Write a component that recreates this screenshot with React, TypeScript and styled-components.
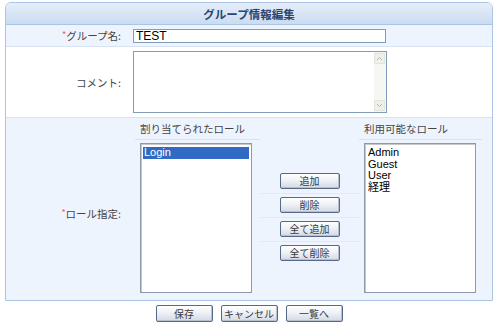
import styled, { createGlobalStyle } from 'styled-components';

const GlobalStyle = createGlobalStyle`
    body {
        margin: 0;
        background: #fff;
        font-family: "Liberation Sans", "Noto Sans CJK JP", sans-serif;
        color: #333;
    }
`

const Page = styled.div`
    padding: 2px 0 0 5px;
    width: 498px;
    box-sizing: border-box;
`

const Panel = styled.div`
    width: 488px;
    box-sizing: border-box;
    border: 1px solid #a9c4e5;
    border-radius: 6px 6px 0 0;
    overflow: hidden;
`

const Header = styled.div`
    height: 21px;
    border-bottom: 1px solid #a9c4e5;
    background: linear-gradient(#e6eefa, #cbdcf1);
    display: flex;
    align-items: center;
    justify-content: center;
    font-family: "Noto Sans CJK JP", sans-serif;
    font-size: 11.5px;
    font-weight: bold;
    color: #2a4670;
`

const Row = styled.div<{ $shade?: boolean; $h: number }>`
    display: grid;
    grid-template-columns: 127px 1fr;
    height: ${p => p.$h}px;
    box-sizing: border-box;
    background: ${p => (p.$shade ? '#eef4fd' : '#fff')};
    border-bottom: 1px solid #d7e3f3;

    &:last-child {
        border-bottom: none;
    }
`

const Label = styled.div<{ $drop?: number }>`
    align-self: center;
    text-align: right;
    padding-right: 12px;
    margin-top: ${p => p.$drop || 0}px;
    font-family: "Noto Sans CJK JP", sans-serif;
    font-size: 10.5px;
    color: #444;
`

const Req = styled.span`
    color: #e8605a;
    font-size: 9px;
    vertical-align: 2px;
`

const Cell = styled.div<{ $pad?: string }>`
    display: flex;
    align-items: flex-start;
    padding: ${p => p.$pad || '0'};
`

const TextInput = styled.input`
    width: 253px;
    height: 14px;
    box-sizing: border-box;
    border: 1px solid #7f9db9;
    padding: 0 2px;
    font-family: "Liberation Sans", sans-serif;
    font-size: 12px;
    color: #000;
    outline: none;
`

const AreaWrap = styled.div`
    width: 254px;
    height: 62px;
    box-sizing: border-box;
    border: 1px solid #7f9db9;
    display: flex;
    background: #fff;
`

const Area = styled.textarea`
    flex: 1;
    border: none;
    resize: none;
    outline: none;
    padding: 2px;
    font-family: "Liberation Sans", sans-serif;
    font-size: 12px;
`

const ScrollBar = styled.div`
    width: 11px;
    display: flex;
    flex-direction: column;
    justify-content: space-between;
    background: #f6f6f2;
    padding: 1px 1px 1px 0;
`

const ScrollBtn = styled.div`
    height: 11px;
    background: #f0f0ea;
    border: 1px solid #e4e4dc;
    box-sizing: border-box;
    display: flex;
    align-items: center;
    justify-content: center;
`

const RoleGrid = styled.div`
    display: grid;
    grid-template-columns: 125px 99px 123px;
    grid-template-rows: 22px 1fr;
    padding-left: 2px;
    height: 100%;
`

const ColHead = styled.div<{ $indent: number; $line?: boolean }>`
    font-family: "Noto Sans CJK JP", sans-serif;
    font-size: 10.5px;
    color: #444;
    padding-left: ${p => p.$indent}px;
    display: flex;
    align-items: center;
    border-bottom: ${p => (p.$line ? '1px solid #d7e3f3' : 'none')};
`

const ListCell = styled.div<{ $indent: number }>`
    padding: 3px 0 0 ${p => p.$indent}px;
`

const ListBox = styled.div`
    width: 112px;
    height: 150px;
    box-sizing: border-box;
    border: 1px solid #8c9aab;
    box-shadow: inset 1px 1px 0 #c8c8c8;
    background: #fff;
    padding: 3px 2px;
    font-family: "Liberation Sans", "Noto Sans CJK JP", sans-serif;
    font-size: 11px;
    color: #000;
`

const ListItem = styled.div<{ $selected?: boolean }>`
    height: 11.5px;
    line-height: 11.5px;
    padding-left: 1px;
    background: ${p => (p.$selected ? '#316ac5' : 'transparent')};
    color: ${p => (p.$selected ? '#fff' : '#000')};
    white-space: nowrap;
`

const BtnColumn = styled.div`
    padding-top: 29px;
    display: flex;
    flex-direction: column;
`

const BtnCell = styled.div`
    height: 24px;
    box-sizing: border-box;
    display: flex;
    justify-content: center;
    padding-top: 4px;

    & + & {
        border-top: 1px solid #e2e9f2;
        padding-top: 3px;
    }
`

const Button = styled.button<{ $w: number; $h: number }>`
    width: ${p => p.$w}px;
    height: ${p => p.$h}px;
    padding: 0;
    border: 1px solid #56698a;
    border-radius: 2px;
    background: linear-gradient(#ffffff, #eef1f6 45%, #d3d9e4);
    box-shadow: inset -1px -1px 0 #b8c0ce;
    font-family: "Noto Sans CJK JP", sans-serif;
    font-size: 10px;
    line-height: 1;
    color: #3a3a3a;
    cursor: pointer;
`

const Footer = styled.div`
    width: 488px;
    display: flex;
    justify-content: center;
    gap: 8px;
    padding-top: 4px;
`

const Chevron = ({ up }: { up?: boolean }) => (
    <svg width="7" height="5" viewBox="0 0 7 5">
        <path d={up ? 'M1 4 L3.5 1.5 L6 4' : 'M1 1 L3.5 3.5 L6 1'} fill="none" stroke="#b8b8b0" strokeWidth="1" />
    </svg>
)

const assigned = ['Login']
const available = ['Admin', 'Guest', 'User', '経理']
const moves = ['追加', '削除', '全て追加', '全て削除']

const App: React.FC = () => {
    return (
        <Page>
            <GlobalStyle />
            <Panel>
                <Header>グループ情報編集</Header>
                <Row $shade $h={22}>
                    <Label><Req>*</Req>グループ名:</Label>
                    <Cell $pad="4px 0 0 0">
                        <TextInput defaultValue="TEST" />
                    </Cell>
                </Row>
                <Row $h={71}>
                    <Label>コメント:</Label>
                    <Cell $pad="4px 0 0 0">
                        <AreaWrap>
                            <Area />
                            <ScrollBar>
                                <ScrollBtn><Chevron up /></ScrollBtn>
                                <ScrollBtn><Chevron /></ScrollBtn>
                            </ScrollBar>
                        </AreaWrap>
                    </Cell>
                </Row>
                <Row $shade $h={182}>
                    <Label $drop={8}><Req>*</Req>ロール指定:</Label>
                    <RoleGrid>
                        <ColHead $indent={5} $line>割り当てられたロール</ColHead>
                        <ColHead $indent={0} />
                        <ColHead $indent={5} $line>利用可能なロール</ColHead>
                        <ListCell $indent={5}>
                            <ListBox>
                                {assigned.map((r, i) => (
                                    <ListItem key={r} $selected={i === 0}>{r}</ListItem>
                                ))}
                            </ListBox>
                        </ListCell>
                        <BtnColumn>
                            {moves.map(m => (
                                <BtnCell key={m}>
                                    <Button $w={60} $h={16}>{m}</Button>
                                </BtnCell>
                            ))}
                        </BtnColumn>
                        <ListCell $indent={5}>
                            <ListBox>
                                {available.map(r => (
                                    <ListItem key={r}>{r}</ListItem>
                                ))}
                            </ListBox>
                        </ListCell>
                    </RoleGrid>
                </Row>
            </Panel>
            <Footer>
                <Button $w={57} $h={17}>保存</Button>
                <Button $w={57} $h={17}>キャンセル</Button>
                <Button $w={57} $h={17}>一覧へ</Button>
            </Footer>
        </Page>
    );
}

export default App;
